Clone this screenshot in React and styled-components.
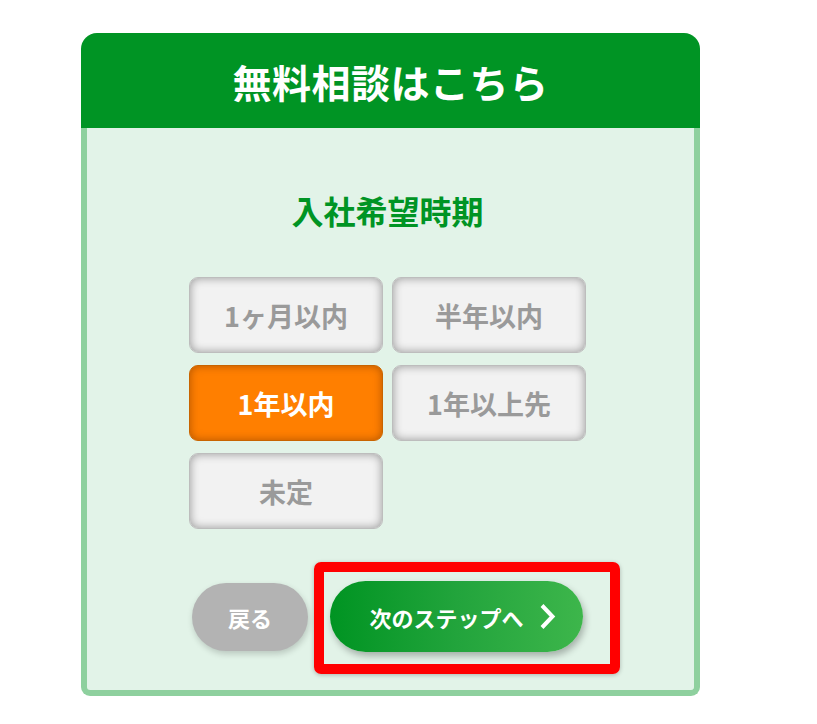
import React, { useState } from 'react'
import styled, { createGlobalStyle } from 'styled-components'

const GlobalStyle = createGlobalStyle`
  body {
    margin: 0;
    background: #fff;
    font-family: "Noto Sans CJK JP", "Noto Sans", sans-serif;
  }
`

const Page = styled.div`
  padding: 33px 0 0 81px;
`

const Card = styled.div`
  width: 619px;
`

const Header = styled.div`
  height: 95px;
  background: #009424;
  border-radius: 16px 16px 0 0;
  display: flex;
  align-items: center;
  justify-content: center;
  color: #fff;
  font-size: 39px;
  font-weight: 700;
  letter-spacing: 0.5px;
`

const Body = styled.div`
  background: #e2f3e8;
  border: 6px solid #8ed09e;
  border-top: none;
  border-radius: 0 0 9px 9px;
  padding: 62px 6px 38px 0;
  display: flex;
  flex-direction: column;
  align-items: center;
`

const StepTitle = styled.h2`
  margin: 0;
  color: #009424;
  font-size: 32px;
  font-weight: 700;
  line-height: 40px;
`

const Options = styled.div`
  margin-top: 47px;
  display: grid;
  grid-template-columns: 194px 194px;
  grid-auto-rows: 76px;
  gap: 12px 9px;
`

const Option = styled.button`
  font-family: inherit;
  font-size: 27px;
  font-weight: 700;
  border-radius: 9px;
  cursor: pointer;
  border: 1px solid ${p => (p.active ? '#c86400' : '#bdbdbd')};
  background: ${p => (p.active ? '#ff7f00' : '#f2f2f2')};
  color: ${p => (p.active ? '#fff' : '#9a9a9a')};
  box-shadow: ${p => (p.active
    ? 'inset 0 0 9px rgba(110, 45, 0, 0.5)'
    : 'inset 0 0 10px rgba(0, 0, 0, 0.38)')};
`

const Actions = styled.div`
  margin-top: 52px;
  display: flex;
  align-items: center;
  gap: 22px;
`

const BackButton = styled.button`
  width: 116px;
  height: 68px;
  border: none;
  border-radius: 34px;
  background: #b3b3b3;
  color: #fff;
  font-family: inherit;
  font-size: 22px;
  font-weight: 700;
  box-shadow: 1px 3px 6px rgba(0, 0, 0, 0.18);
  cursor: pointer;
`

const NextWrap = styled.div`
  position: relative;
`

const NextButton = styled.button`
  width: 253px;
  height: 71px;
  border: none;
  border-radius: 36px;
  background: linear-gradient(90deg, #009422 0%, #22a43c 50%, #3db64b 100%);
  color: #fff;
  font-family: inherit;
  font-size: 22px;
  font-weight: 700;
  display: flex;
  align-items: center;
  justify-content: center;
  gap: 15px;
  padding-left: 18px;
  box-shadow: 2px 4px 7px rgba(0, 0, 0, 0.28);
  cursor: pointer;

  svg {
    display: block;
  }
`

const Highlight = styled.div`
  position: absolute;
  top: -19px;
  left: -16px;
  right: -37px;
  bottom: -22px;
  border: 10px solid #ff0000;
  border-radius: 7px;
  box-shadow: 0 1px 4px rgba(0, 0, 0, 0.25);
  pointer-events: none;
`

const periods = ['1ヶ月以内', '半年以内', '1年以内', '1年以上先', '未定']

const Chevron = () => (
  <svg width="17" height="27" viewBox="0 0 17 27">
    <path d="M3 2.5 L13.5 13.5 L3 24.5" fill="none" stroke="#fff" strokeWidth="4" />
  </svg>
)

export default function App() {
  const [selected, setSelected] = useState('1年以内')

  return (
    <Page>
      <GlobalStyle />
      <Card>
        <Header>無料相談はこちら</Header>
        <Body>
          <StepTitle>入社希望時期</StepTitle>
          <Options>
            {periods.map(p => (
              <Option key={p} active={selected === p} onClick={() => setSelected(p)}>
                {p}
              </Option>
            ))}
          </Options>
          <Actions>
            <BackButton>戻る</BackButton>
            <NextWrap>
              <NextButton>
                次のステップへ
                <Chevron />
              </NextButton>
              <Highlight />
            </NextWrap>
          </Actions>
        </Body>
      </Card>
    </Page>
  )
}
